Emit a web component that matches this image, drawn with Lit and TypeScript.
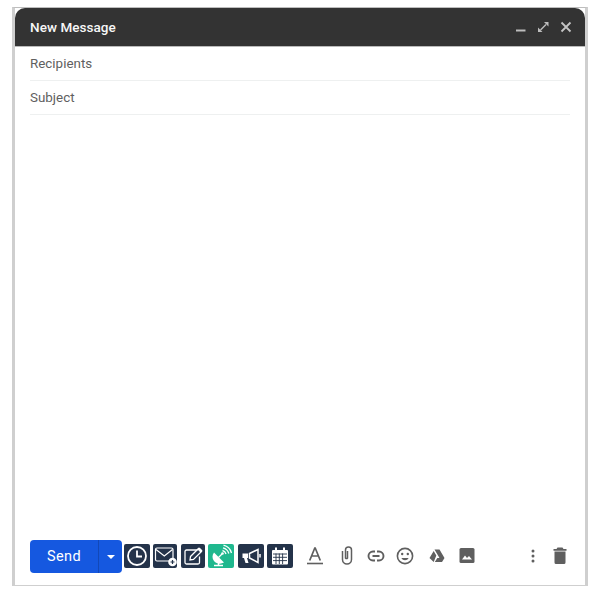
import { LitElement, html, css, svg } from "lit";
import { customElement } from "lit/decorators.js";

const tile = (cls: string, inner: unknown) => html`<span class="tile ${cls}"><svg viewBox="0 0 26 24" width="26" height="24">${inner}</svg></span>`;
const tool = (w: number, inner: unknown) => html`<svg class="tool" style="width:${w}px" viewBox="0 0 ${w} 24" height="24">${inner}</svg>`;

@customElement("app-root")
export class AppRoot extends LitElement {
  static styles = css`
    :host { display: block; width: 600px; height: 597px; background: #fff; font-family: Roboto, "Liberation Sans", sans-serif; overflow: hidden; }
    .frame { box-sizing: border-box; margin: 7px 0 0 12px; width: 576px; height: 579px; border: solid #cfcfcf; border-width: 1px 3px 1px 3px; border-top-color: #bdbdbd; display: flex; flex-direction: column; background: #fff; }
    .head { height: 39px; flex: none; background: #333; border-radius: 10px 10px 0 0; display: flex; align-items: center; padding: 0 11.5px 0 15px; color: #fff; border-bottom: 1px solid #bbb; box-sizing: border-box; }
    .title { font-size: 13.5px; font-weight: 500; letter-spacing: .05px; flex: 1; color: #f7f7f7; }
    .win { display: flex; gap: 6.5px; align-items: center; }
    .field { margin: 0 15px; height: 34px; box-sizing: border-box; border-bottom: 1px solid #eef0f0; display: flex; align-items: center; font-size: 13.4px; color: #5f5f5f; flex: none; }
    .body { flex: 1; }
    .bar { display: flex; align-items: center; height: 33px; margin: 0 0 12px 15px; }
    .send { width: 92px; height: 33px; background: #1558e0; border-radius: 4px; display: flex; color: #fff; font-size: 14.5px; font-weight: 400; letter-spacing: .4px; overflow: hidden; flex: none; }
    .send-main { width: 68px; display: flex; align-items: center; justify-content: center; border-right: 1px solid #1248b8; }
    .send-arrow { flex: 1; display: flex; align-items: center; justify-content: center; }
    .caret { width: 0; height: 0; border: 4px solid transparent; border-top: 4px solid #fff; border-bottom: 0; }
    .tiles { display: flex; align-self: flex-start; margin: 4px 0 0 2px; gap: 3px; }
    .tile { width: 26px; height: 24px; background: #24334a; border-radius: 2px; display: block; flex: none; }
    .tile svg { display: block; }
    .tile.green { background: #1fb88e; margin-right: 1px; }
    .tile.tight { width: 24px; overflow: hidden; }
    .tile.wide-after { margin-right: 1px; }
    .tools { display: flex; align-items: center; flex: 1; margin: 0 18px 1px 13px; }
    .tool { display: block; flex: none; }
    .spacer { flex: 1; }
    .g17 { width: 17px; flex: none; }
    .g18 { width: 18px; flex: none; }
    .g14 { width: 14px; flex: none; }
    .g11 { width: 11px; flex: none; }
    .g15 { width: 15px; flex: none; }
  `;

  render() {
    return html`<div class="frame">
      <div class="head">
        <span class="title">New Message</span>
        <span class="win">
          <svg width="16" height="16" viewBox="0 0 16 16"><path d="M3 11.500h9.500" stroke="#bdbdbd" stroke-width="2"/></svg>
          <svg width="16" height="16" viewBox="0 0 16 16" fill="#bdbdbd"><path d="M9 3h4.500v4.500zM3 8.500v4.500h4.500z"/><path d="M11 5.500L5.500 11" stroke="#bdbdbd" stroke-width="1.400"/></svg>
          <svg width="16" height="16" viewBox="0 0 16 16"><path d="M3.500 3.500l9 9M12.500 3.500l-9 9" stroke="#c4c4c4" stroke-width="1.800"/></svg>
        </span>
      </div>
      <div class="field">Recipients</div>
      <div class="field">Subject</div>
      <div class="body"></div>
      <div class="bar">
        <div class="send"><span class="send-main">Send</span><span class="send-arrow"><span class="caret"></span></span></div>
        <div class="tiles">
          ${tile("", svg`<circle cx="13" cy="12" r="9" fill="none" stroke="#fff" stroke-width="1.800"/><path d="M13 6.500V12.500H18" fill="none" stroke="#fff" stroke-width="1.800"/>`)}
          ${tile("tight wide-after", svg`<rect x="2.500" y="4" width="17.500" height="13" rx="1.500" fill="none" stroke="#fff" stroke-width="1.200"/><path d="M3 5.500L11.300 12L19.500 5.500" fill="none" stroke="#fff" stroke-width="1.200"/><circle cx="19.500" cy="18" r="4.300" fill="#fff"/><path d="M17.500 18h4M19.500 16v4" stroke="#24334a" stroke-width="1.200"/>`)}
          ${tile("tight", svg`<path d="M16.500 6H5.500A1.500 1.500 0 0 0 4 7.500V18.500A1.500 1.500 0 0 0 5.500 20H17A1.500 1.500 0 0 0 18.500 18.500V12.500" fill="none" stroke="#fff" stroke-width="1.300"/><path d="M9.500 12.500L17.500 4.500L20.500 7.500L12.500 15.500L9 16z" fill="none" stroke="#fff" stroke-width="1.300"/><path d="M16.500 5.500L19.500 8.500L21.500 6.500L18.500 3.500z" fill="#fff"/>`)}
          ${tile("green", svg`<path d="M6 8.500L16 18.500C12.500 20.500 8.500 19.800 6 17C4 14.500 4 11 6 8.500z" fill="#fff"/><path d="M10.500 13.500L14 10" stroke="#fff" stroke-width="1.300"/><circle cx="14.500" cy="9.500" r="1.300" fill="#fff"/><path d="M6 21.500H15M10.500 18.500V21" stroke="#fff" stroke-width="1.500"/><path d="M14.500 6.500A5 5 0 0 1 18 10M15 3.800A8 8 0 0 1 20.800 9.500M15.500 1.200A11 11 0 0 1 23.500 9" fill="none" stroke="#fff" stroke-width="1.300"/>`)}
          ${tile("", svg`<path d="M4.500 9.500H10V14H9L10.500 19H7.500L6 14H4.500z" fill="#fff"/><path d="M11.500 9.500L20 5.500V18.500L11.500 14z" fill="none" stroke="#fff" stroke-width="1.500"/><path d="M22 10V13.500" stroke="#fff" stroke-width="1.500"/>`)}
          ${tile("", svg`<rect x="5" y="6" width="16" height="14.500" rx="1" fill="#fff"/><path d="M9 3.500V7.500M17 3.500V7.500" stroke="#fff" stroke-width="2"/><path d="M6 10H20M6 13.300H20M6 16.600H20M9 9.500V20M12.300 9.500V20M15.600 9.500V20" stroke="#24334a" stroke-width=".9"/>`)}
        </div>
        <div class="tools">
          ${tool(18, svg`<path d="M9 3.500L3.700 16.500M9 3.500L14.300 16.500M5.500 12H12.500" fill="none" stroke="#5f5f5f" stroke-width="1.700"/><path d="M1 19.500H17" stroke="#5f5f5f" stroke-width="1.600"/>`)}
          <span class="g17"></span>
          ${tool(12, svg`<path d="M6.500 7V14A1.200 1.200 0 0 1 4.500 14V6A3 3 0 0 1 10.500 6V15.500A4.500 4.500 0 0 1 1.500 15.500V7" fill="none" stroke="#5f5f5f" stroke-width="1.500"/>`)}
          <span class="g14"></span>
          ${tool(18, svg`<path d="M8 7.500H6A4.500 4.500 0 0 0 6 16.500H8M10 7.500H12A4.500 4.500 0 0 1 12 16.500H10M5.500 12H12.500" fill="none" stroke="#5f5f5f" stroke-width="1.900"/>`)}
          <span class="g11"></span>
          ${tool(18, svg`<circle cx="9" cy="12" r="7.600" fill="none" stroke="#5f5f5f" stroke-width="1.600"/><circle cx="6.200" cy="10" r="1.200" fill="#5f5f5f"/><circle cx="11.800" cy="10" r="1.200" fill="#5f5f5f"/><path d="M5.300 14A4.200 4.200 0 0 0 12.700 14z" fill="#5f5f5f"/>`)}
          <span class="g15"></span>
          ${tool(16, svg`<path d="M5.500 5.500H10.500L15.500 14H10.500zM4.700 7L7.300 11.400L4.700 18L0.500 14zM5.800 18L8.300 14H15.500L13 18z" fill="#5f5f5f"/>`)}
          <span class="g14"></span>
          ${tool(16, svg`<rect x="0.500" y="4" width="15" height="15" rx="1.500" fill="#5f5f5f"/><path d="M3 15.500L6 11.500L8 14L10 12L13 15.500z" fill="#fff"/>`)}
          <span class="spacer"></span>
          ${tool(4, svg`<circle cx="2" cy="7" r="1.500" fill="#5f5f5f"/><circle cx="2" cy="12" r="1.500" fill="#5f5f5f"/><circle cx="2" cy="17" r="1.500" fill="#5f5f5f"/>`)}
          <span class="g18"></span>
          ${tool(14, svg`<path d="M.500 5H13.500V6.800H.500zM4.500 3.500H9.500L10.500 5H3.500zM1.500 7.500H12.500V18.500A1.500 1.500 0 0 1 11 20H3A1.500 1.500 0 0 1 1.500 18.500z" fill="#5f5f5f"/>`)}
        </div>
      </div>
    </div>`;
  }
}
